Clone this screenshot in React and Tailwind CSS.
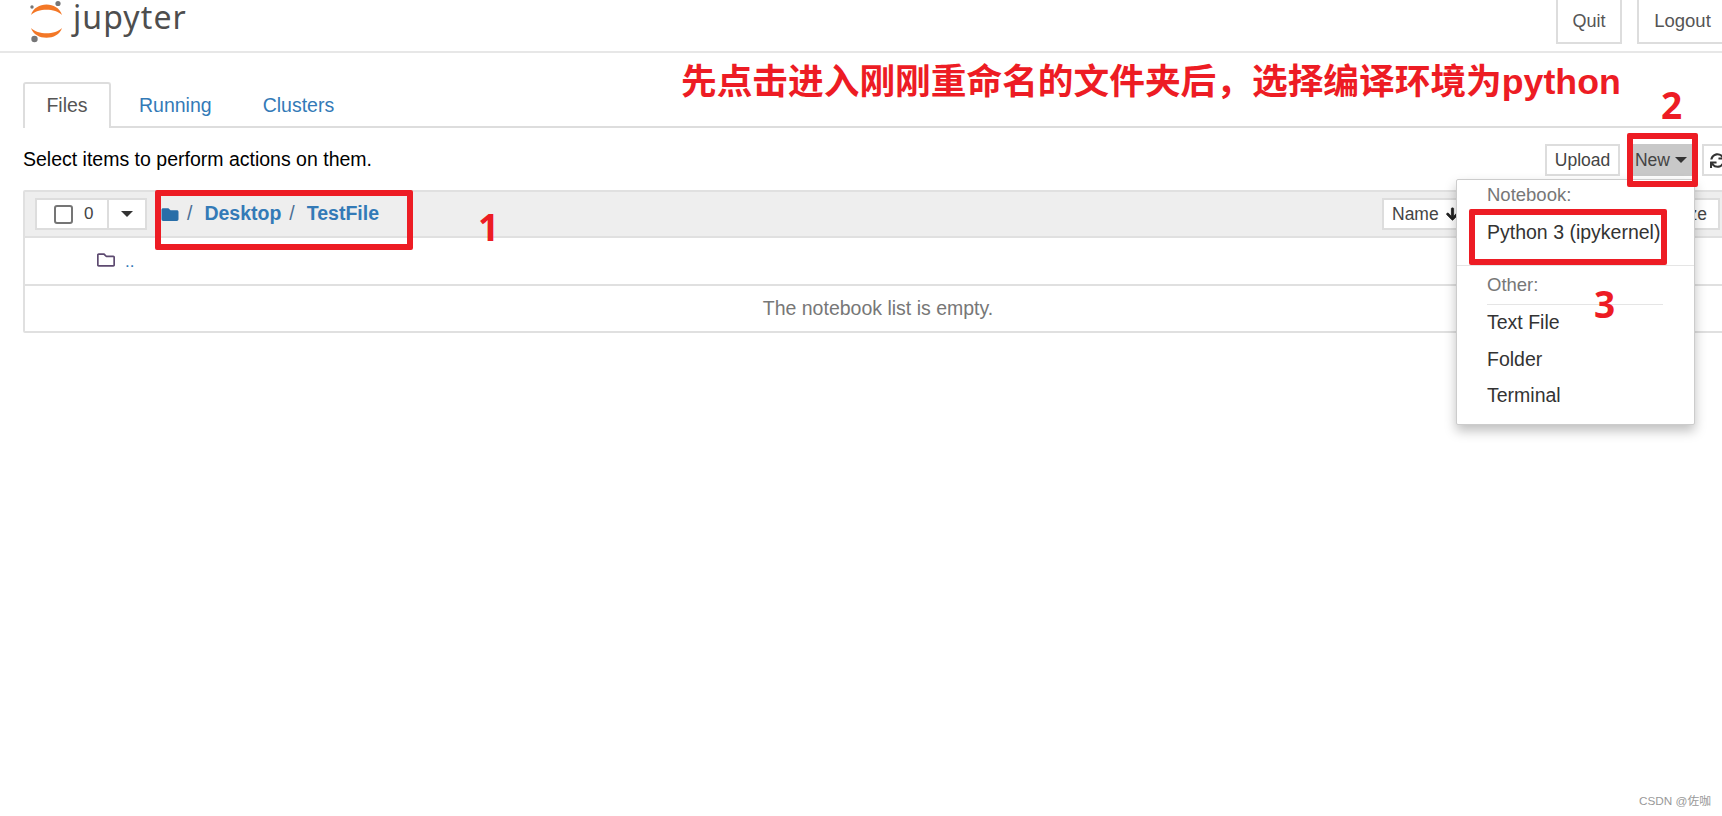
import { FaFolder, FaRegFolder, FaArrowDown, FaSync } from 'react-icons/fa'

const Caret = ({ className = '' }) => (
  <span className={`inline-block w-0 h-0 border-x-[6px] border-x-transparent border-t-[6px] border-t-[#333] ${className}`}></span>
)

const Logo = () => (
  <svg width="36" height="44" viewBox="28 0 36 44" className="shrink-0">
    <path d="M31 15C35 1 58 1 62 15C55 8 38 8 31 15Z" fill="#f37726" />
    <path d="M31 28C38 35 55 35 62 28C58 41 35 41 31 28Z" fill="#f37726" />
    <circle cx="58" cy="3.5" r="2.6" fill="#767677" />
    <circle cx="32" cy="7" r="1.7" fill="#767677" />
    <circle cx="34.5" cy="39" r="3.2" fill="#767677" />
  </svg>
)

const RedBox = ({ className }) => (
  <div className={`absolute z-20 border-[6px] border-[#ed1c24] rounded-[2px] ${className}`}></div>
)

const Mark = ({ className, children }) => (
  <div className={`absolute z-20 font-['Open_Sans',sans-serif] font-bold text-[37px] leading-none text-[#ed1c24] ${className}`}>
    {children}
  </div>
)

const MenuLabel = ({ className = '', children }) => (
  <div className={`px-[30px] text-[18.5px] text-[#777] flex items-center ${className}`}>{children}</div>
)

const MenuItem = ({ className = '', children }) => (
  <div className={`px-[30px] text-[19.5px] text-[#333] flex items-center whitespace-nowrap ${className}`}>{children}</div>
)

const NewMenu = () => (
  <div className="absolute top-[35px] right-0 w-[239px] h-[246px] bg-white border border-[#ccc] rounded-[2px] shadow-[0_6px_12px_rgba(0,0,0,0.25)] z-10">
    <MenuLabel className="h-[30px]">Notebook:</MenuLabel>
    <MenuItem className="h-[45px]">Python 3 (ipykernel)</MenuItem>
    <div className="h-px mt-[10px] bg-[#e5e5e5]"></div>
    <MenuLabel className="h-[38px]">Other:</MenuLabel>
    <div className="h-px ml-[30px] mr-[31px] bg-[#e5e5e5]"></div>
    <MenuItem className="h-[36px]">Text File</MenuItem>
    <MenuItem className="h-[37px]">Folder</MenuItem>
    <MenuItem className="h-[36px]">Terminal</MenuItem>
  </div>
)

export default function App() {
  return (
    <div className="relative w-[1722px] h-[816px] overflow-hidden bg-white font-['Liberation_Sans',sans-serif] text-[#333]">
      {/* Header */}
      <header className="h-[53px] border-b-2 border-[#e7e7e7]">
        <div className="w-[1733px] h-[51px] flex items-start">
          <div className="flex items-start ml-[28px] gap-[9px]">
            <Logo />
            <span className="font-['Noto_Sans',sans-serif] text-[32px] tracking-[1.1px] leading-[34px] text-[#4e4e4e]">jupyter</span>
          </div>
          <div className="ml-auto flex gap-[15px]">
            <div className="w-[66px] h-[44px] border-2 border-t-0 border-[#ddd] flex items-center justify-center text-[18px] text-[#555]">Quit</div>
            <div className="w-[96px] h-[44px] border-2 border-t-0 border-[#ddd] flex items-center justify-center pr-[5px] text-[18.5px] text-[#555]">Logout</div>
          </div>
        </div>
      </header>

      {/* Main */}
      <main className="w-[1733px] pl-[23px] pt-[29px]">
        <div className="flex border-b-2 border-[#ddd] h-[46px]">
          <div className="w-[88px] h-[46px] border-2 border-b-0 border-[#ddd] rounded-t-[3px] bg-white flex items-center justify-center text-[19.5px] text-[#555]">Files</div>
          <div className="ml-[4px] px-[24px] pt-[1px] h-[46px] flex items-center text-[19.5px] text-[#337ab7]">Running</div>
          <div className="ml-[3px] px-[24px] pt-[1px] h-[46px] flex items-center text-[19.5px] text-[#337ab7]">Clusters</div>
        </div>

        <div className="flex items-center h-[32px] mt-[16px]">
          <p className="text-[19.5px] text-black">Select items to perform actions on them.</p>
          <div className="ml-auto flex gap-[7px]">
            <div className="w-[75px] h-[32px] border-2 border-[#ddd] flex items-center justify-center text-[17.5px] text-[#444]">Upload</div>
            <div className="relative w-[68px] h-[32px] bg-[#c8c8c8] border-l-2 border-[#999] flex items-center justify-center pr-[2px] gap-[5px] text-[17.5px] text-[#444]">
              New <Caret />
              <NewMenu />
            </div>
            <div className="w-[31px] h-[32px] border-2 border-[#ddd] flex items-center justify-center text-[#333]">
              <FaSync className="w-[15px] h-[15px]" />
            </div>
          </div>
        </div>

        {/* File list */}
        <div className="mt-[14px] border-2 border-[#e0e0e0] rounded-[2px]">
          <div className="h-[46px] bg-[#eeeeee] border-b-2 border-[#e0e0e0] flex items-center pl-[10px] pr-[11px]">
            <div className="w-[112px] h-[32px] bg-white border-2 border-[#ddd] flex items-center">
              <div className="w-[72px] h-full flex items-center border-r-2 border-[#ddd] pl-[17px] gap-[11px]">
                <span className="w-[19px] h-[19px] border-2 border-[#757575] rounded-[3px]"></span>
                <span className="text-[17px] text-[#444]">0</span>
              </div>
              <div className="flex-1 flex justify-center">
                <Caret />
              </div>
            </div>
            <div className="flex items-center ml-[14px] text-[19.5px] text-[#337ab7] font-bold">
              <FaFolder className="w-[18px] h-[17px] text-[#286ea8]" />
              <span className="ml-[8px] font-normal text-[#4b6f94]">/</span>
              <span className="ml-[12px]">Desktop</span>
              <span className="ml-[8px] font-normal text-[#4b6f94]">/</span>
              <span className="ml-[12px]">TestFile</span>
            </div>
            <div className="ml-auto flex gap-[4px]">
              <div className="w-[90px] h-[32px] bg-white border-2 border-[#ddd] flex items-center pl-[8px] gap-[7px] text-[17.5px] text-[#444]">
                Name <FaArrowDown className="w-[13px] h-[14px] text-[#222]" stroke="currentColor" strokeWidth={30} />
              </div>
              <div className="w-[140px] h-[32px] bg-white border-2 border-[#ddd]"></div>
              <div className="w-[100px] h-[32px] bg-white border-2 border-[#ddd] flex items-center justify-end pr-[11px] text-[17.5px] text-[#444]">File size</div>
            </div>
          </div>
          <div className="h-[48px] border-b-2 border-[#e0e0e0] flex items-center pl-[71px] gap-[9px] pb-[3px]">
            <FaRegFolder className="w-[20px] h-[18px] text-[#5d4a70]" />
            <span className="text-[17px] text-[#337ab7] mt-[4px]">..</span>
          </div>
          <div className="h-[45px] flex items-center justify-center text-[19.5px] text-[#777]">The notebook list is empty.</div>
        </div>
      </main>

      {/* Annotations */}
      <div className="absolute z-20 left-[681px] top-[60px] font-['Liberation_Sans','Noto_Sans_CJK_SC',sans-serif] font-bold text-[35.7px] leading-[44px] text-[#ed1c24] whitespace-nowrap">
        先点击进入刚刚重命名的文件夹后，选择编译环境为python
      </div>
      <RedBox className="left-[155px] top-[190px] w-[258px] h-[60px]" />
      <RedBox className="left-[1627px] top-[133px] w-[71px] h-[54px]" />
      <RedBox className="left-[1469px] top-[209px] w-[198px] h-[56px]" />
      <Mark className="left-[478px] top-[208px]">1</Mark>
      <Mark className="left-[1661px] top-[86px]">2</Mark>
      <Mark className="left-[1594px] top-[285px]">3</Mark>

      <div className="absolute left-[1639px] top-[794px] font-['Liberation_Sans','Noto_Sans_CJK_SC',sans-serif] text-[11.75px] leading-[14px] text-[#999] whitespace-nowrap">
        CSDN @佐咖
      </div>
    </div>
  )
}
